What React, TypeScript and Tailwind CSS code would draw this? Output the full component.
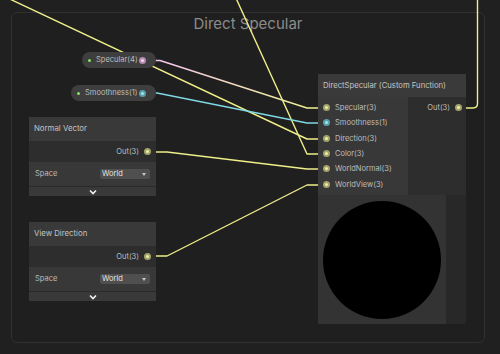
import React from "react";

type PortKind = "v3" | "v1" | "v4";

function Port({ kind = "v3" }: { kind?: PortKind }) {
  const outer =
    kind === "v1" ? "bg-[#5a9fab]" : kind === "v4" ? "bg-[#b48cb1]" : "bg-[#a3a36f]";
  const inner =
    kind === "v1" ? "bg-[#9ae8f0]" : kind === "v4" ? "bg-[#f8d4f4]" : "bg-[#eef09a]";
  return (
    <span className={`flex h-[7px] w-[7px] shrink-0 items-center justify-center rounded-full ${outer}`}>
      <span className={`h-[3px] w-[3px] rounded-full ${inner}`} />
    </span>
  );
}

function Chevron() {
  return (
    <svg width="8" height="6" viewBox="0 0 8 6" className="block">
      <polyline points="1,1.5 4,4.5 7,1.5" fill="none" stroke="#f0f0f0" strokeWidth="1.6" />
    </svg>
  );
}

function PropertyPill({ label, kind, className }: { label: string; kind: PortKind; className: string }) {
  return (
    <div className={`absolute flex h-[16px] items-center rounded-full bg-[#3e3e3e] pl-[6px] pr-[10px] ${className}`}>
      <span className="h-[3px] w-[3px] rounded-full bg-[#86e55c]" />
      <span className="ml-[5px] flex-1 text-[7.5px] text-[#bdbdbd]">{label}</span>
      <Port kind={kind} />
    </div>
  );
}

function VectorNode({ title, className }: { title: string; className: string }) {
  return (
    <div className={`absolute flex w-[127px] flex-col bg-[#2c2c2c] ${className}`}>
      <div className="flex h-[24px] items-center bg-[#393939] px-[5px] text-[7.8px] text-[#c2c2c2]">{title}</div>
      <div className="flex h-[21px] items-center justify-end gap-[5px] bg-[#2d2d2d] pr-[5px] text-[7.5px] text-[#bdbdbd]">
        <span>Out(3)</span>
        <Port />
      </div>
      <div className="flex h-[24px] items-center justify-between bg-[#383838] pl-[6px] pr-[6px] text-[7.5px]">
        <span className="text-[#bdbdbd]">Space</span>
        <div className="flex h-[10px] w-[50px] items-center justify-between rounded-[2px] bg-[#4f4f4f] pl-[2px] pr-[4px]">
          <span className="text-[#e2e2e2]">World</span>
          <span className="h-0 w-0 border-x-[2.5px] border-t-[3px] border-x-transparent border-t-[#c8c8c8]" />
        </div>
      </div>
      <div className="flex h-[10px] items-center justify-center border-t border-[#2a2a2a] bg-[#393939]">
        <Chevron />
      </div>
    </div>
  );
}

const inputs: { label: string; kind: PortKind }[] = [
  { label: "Specular(3)", kind: "v3" },
  { label: "Smoothness(1)", kind: "v1" },
  { label: "Direction(3)", kind: "v3" },
  { label: "Color(3)", kind: "v3" },
  { label: "WorldNormal(3)", kind: "v3" },
  { label: "WorldView(3)", kind: "v3" },
];

export default function App() {
  return (
    <div className="relative h-[354px] w-[500px] overflow-hidden bg-[#202020] font-['Inter',sans-serif]">
      {/* group frame */}
      <div className="absolute left-[11px] top-[12px] flex h-[331px] w-[474px] justify-center rounded-[6px] border border-[#313131] bg-[#1f1f1f]">
        <span className="mt-[1px] text-[15px] leading-[20px] text-[#8b8b8b]">Direct Specular</span>
      </div>

      {/* edges */}
      <svg className="absolute left-0 top-0" width="500" height="354" viewBox="0 0 500 354" fill="none">
        <defs>
          <linearGradient id="specGrad" gradientUnits="userSpaceOnUse" x1="160" y1="0" x2="310" y2="0">
            <stop offset="0" stopColor="#f4c8ee" />
            <stop offset="1" stopColor="#eeee92" />
          </linearGradient>
        </defs>
        <g strokeWidth="1.4" strokeLinejoin="round">
          <path d="M -20 -15 L 307 139 L 326 139" stroke="#eeee8a" />
          <path d="M 230 -15 L 307 154 L 326 154" stroke="#eeee8a" />
          <path d="M 143 60.5 L 160 60.5 L 307 108 L 326 108" stroke="url(#specGrad)" />
          <path d="M 143 93 L 157 93 L 307 123 L 326 123" stroke="#7fd8e4" />
          <path d="M 148 152 L 167 152 L 307 169 L 326 169" stroke="#eeee8a" />
          <path d="M 148 256 L 167 256 L 307 185 L 326 185" stroke="#eeee8a" />
          <path d="M 459 108 L 473 108 Q 477.5 108 477.5 103.5 L 477.5 -5" stroke="#eeee8a" />
        </g>
      </svg>

      {/* properties */}
      <PropertyPill label="Specular(4)" kind="v4" className="left-[82px] top-[52px] w-[74px]" />
      <PropertyPill label="Smoothness(1)" kind="v1" className="left-[71px] top-[85px] w-[85px]" />

      <VectorNode title="Normal Vector" className="left-[29px] top-[117px]" />
      <VectorNode title="View Direction" className="left-[29px] top-[222px]" />

      {/* custom function node */}
      <div className="absolute left-[318px] top-[74px] flex h-[250px] w-[148px] flex-col overflow-hidden rounded-br-[3px] bg-[#282828]">
        <div className="flex h-[23px] shrink-0 items-center bg-[#3a3a3a] px-[5px] text-[7.7px] text-[#c4c4c4]">
          DirectSpecular (Custom Function)
        </div>
        <div className="flex h-[98px] shrink-0">
          <div className="flex w-[90px] flex-col bg-[#383838] py-[3px]">
            {inputs.map((p) => (
              <div key={p.label} className="flex h-[15.4px] items-center gap-[5px] pl-[5px] text-[7.5px] text-[#bdbdbd]">
                <Port kind={p.kind} />
                <span>{p.label}</span>
              </div>
            ))}
          </div>
          <div className="flex flex-1 flex-col bg-[#2d2d2d] py-[3px]">
            <div className="flex h-[15.4px] items-center justify-end gap-[5px] pr-[4px] text-[7.5px] text-[#bdbdbd]">
              <span>Out(3)</span>
              <Port />
            </div>
          </div>
        </div>
        <div className="flex flex-1">
          <div className="h-full w-[128px] bg-[#333333] pl-[5px] pt-[6px]">
            <div className="h-[118px] w-[118px] rounded-full bg-black" />
          </div>
        </div>
      </div>
    </div>
  );
}
